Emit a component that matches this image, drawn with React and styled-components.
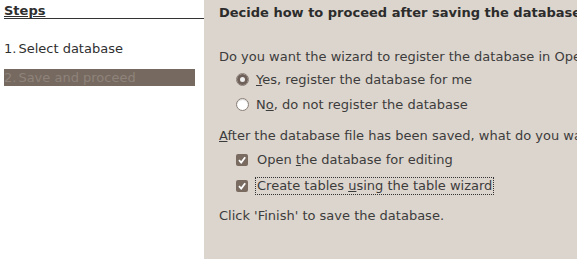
import styled, { createGlobalStyle } from 'styled-components';

const GlobalStyle = createGlobalStyle`
  html, body {
    margin: 0;
    padding: 0;
    width: 577px;
    height: 259px;
    overflow: hidden;
    background: #dcd5cd;
  }
  body {
    font-family: 'DejaVu Sans', 'Liberation Sans', sans-serif;
    font-size: 13px;
    color: #3c3c3c;
  }
`;

const Wizard = styled.div`
  display: flex;
  width: 577px;
  height: 259px;
`;

const Sidebar = styled.aside`
  width: 204px;
  flex-shrink: 0;
  background: #fff;
  padding-left: 4px;
  box-sizing: border-box;
`;

const SideTitle = styled.div`
  font-weight: bold;
  color: #2f2f2f;
  height: 17px;
  line-height: 20px;
  border-bottom: 1px solid #333;
  text-decoration: underline;
  padding-top: 1px;
`;

const StepList = styled.ol`
  list-style: none;
  margin: 21px 0 0;
  padding: 0;
  display: flex;
  flex-direction: column;
  gap: 12px;
`;

const Step = styled.li`
  width: 191px;
  height: 17px;
  line-height: 17px;
  color: ${(p) => (p.$active ? '#8e837a' : '#2f2f2f')};
  background: ${(p) => (p.$active ? '#766960' : 'transparent')};
`;

const StepName = styled.span`
  margin-left: 2px;
`;

const Content = styled.main`
  flex: 1;
  padding-left: 15px;
  white-space: nowrap;
  overflow: hidden;
`;

const Heading = styled.div`
  font-weight: bold;
  color: #2c2c2c;
  height: 20px;
  line-height: 26px;
`;

const Question = styled.div`
  margin-top: ${(p) => p.$top}px;
  height: 20px;
  line-height: 20px;
`;

const Option = styled.label`
  display: flex;
  align-items: center;
  gap: 7px;
  height: 20px;
  margin-top: ${(p) => p.$top}px;
  padding-left: 17px;
`;

const Radio = styled.span`
  width: 11px;
  height: 11px;
  border-radius: 50%;
  border: 1px solid #8a7e76;
  background: #fff;
  box-shadow: inset 0 1px 1px rgba(0, 0, 0, 0.15);
  position: relative;
  flex-shrink: 0;
  &::after {
    content: '';
    display: ${(p) => (p.$checked ? 'block' : 'none')};
    position: absolute;
    inset: 0;
    border-radius: 50%;
    border: 3px solid #6f6159;
    background: #eee;
  }
`;

const Check = styled.span`
  width: 12px;
  height: 12px;
  border-radius: 2px;
  background: #7a6b61;
  display: flex;
  align-items: center;
  justify-content: center;
  flex-shrink: 0;
`;

const Label = styled.span`
  padding: 0 1px;
  border: 1px dotted ${(p) => (p.$focus ? '#333' : 'transparent')};
  line-height: 16px;
`;

const Key = styled.u`
  text-decoration: underline;
`;

function CheckMark() {
  return (
    <svg width="10" height="10" viewBox="0 0 10 10">
      <path d="M2 5.2 L4.2 7.6 L8.2 2.2" fill="none" stroke="#fff" strokeWidth="1.8" />
    </svg>
  );
}

export default function App() {
  return (
    <>
      <GlobalStyle />
      <Wizard>
        <Sidebar>
          <SideTitle>Steps</SideTitle>
          <StepList>
            <Step>
              1.<StepName>Select database</StepName>
            </Step>
            <Step $active>
              2.<StepName>Save and proceed</StepName>
            </Step>
          </StepList>
        </Sidebar>
        <Content>
          <Heading>Decide how to proceed after saving the database</Heading>
          <Question $top={27}>Do you want the wizard to register the database in OpenOffice.org?</Question>
          <Option $top={2}>
            <Radio $checked />
            <span>
              <Key>Y</Key>es, register the database for me
            </span>
          </Option>
          <Option $top={5}>
            <Radio />
            <span>
              N<Key>o</Key>, do not register the database
            </span>
          </Option>
          <Question $top={12}>
            <Key>A</Key>fter the database file has been saved, what do you want to do?
          </Question>
          <Option $top={4}>
            <Check>
              <CheckMark />
            </Check>
            <Label>
              Open <Key>t</Key>he database for editing
            </Label>
          </Option>
          <Option $top={6}>
            <Check>
              <CheckMark />
            </Check>
            <Label $focus>
              Create tables <Key>u</Key>sing the table wizard
            </Label>
          </Option>
          <Question $top={10}>Click 'Finish' to save the database.</Question>
        </Content>
      </Wizard>
    </>
  );
}
